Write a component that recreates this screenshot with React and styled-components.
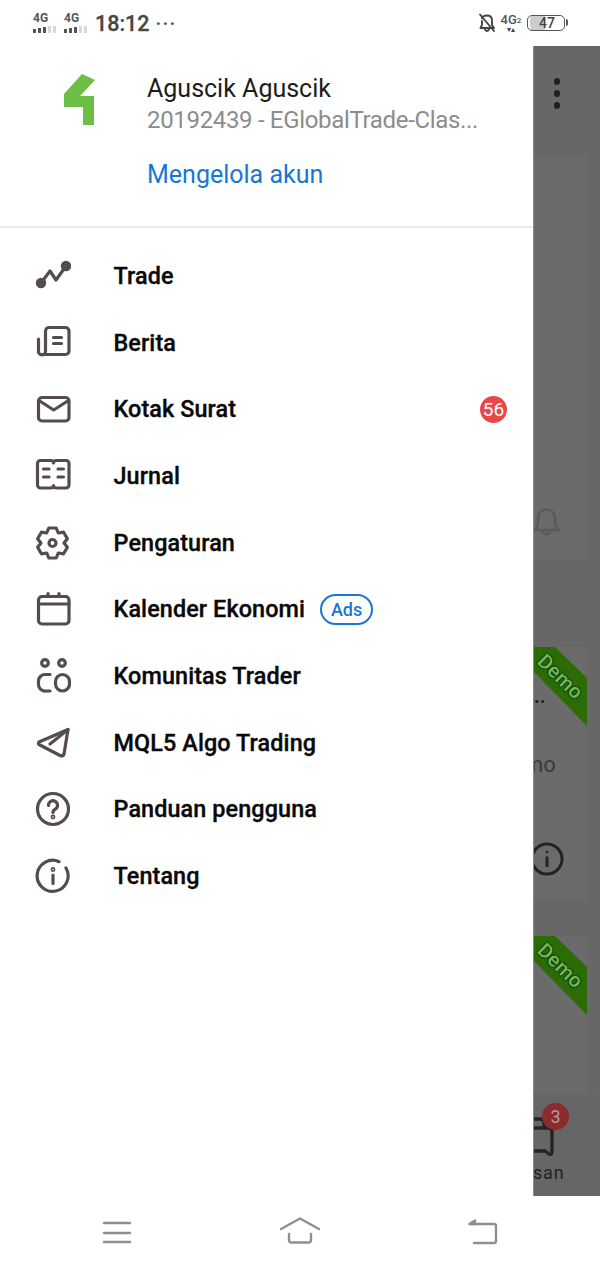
import React from "react";
import styled, { createGlobalStyle } from "styled-components";

const GlobalStyle = createGlobalStyle`
  html, body {
    margin: 0;
    padding: 0;
    background: #fff;
    font-family: Roboto, "Liberation Sans", sans-serif;
  }
`;

const Page = styled.div`
  width: 600px;
  height: 1267px;
  display: flex;
  flex-direction: column;
  overflow: hidden;
  background: #fff;
`;

/* status bar */
const StatusBar = styled.div`
  height: 46px;
  flex: none;
  display: flex;
  align-items: center;
  justify-content: space-between;
  padding: 0 35px 0 33px;
  box-sizing: border-box;
  color: #444;
`;

const StatusGroup = styled.div`
  display: flex;
  align-items: center;
`;

const Signal = styled.div`
  width: 25px;
  display: flex;
  flex-direction: column;
  gap: 2px;
  margin-right: 6px;
`;

const SignalLabel = styled.span`
  font-size: 12px;
  line-height: 11px;
  font-weight: 700;
  color: #555;
`;

const SignalBars = styled.div`
  display: flex;
  align-items: flex-end;
  gap: 2px;
  height: 7px;
`;

const SignalBar = styled.span`
  width: 3px;
  height: ${(p) => p.$h}px;
  background: ${(p) => (p.$on ? "#555" : "#d8d8d8")};
`;

const Clock = styled.span`
  font-size: 21.5px;
  font-weight: 500;
  color: #474747;
  -webkit-text-stroke: 0.3px #474747;
`;

const MoreDots = styled.span`
  font-size: 19px;
  font-weight: 700;
  letter-spacing: 1.2px;
  color: #555;
  margin-left: 6px;
`;

const NetBox = styled.div`
  width: 20px;
  display: flex;
  flex-direction: column;
  align-items: center;
  margin: 0 6px 0 5px;
`;

const NetLabel = styled.span`
  font-size: 13px;
  line-height: 13px;
  font-weight: 500;
  color: #555;
  white-space: nowrap;
  sub {
    font-size: 8px;
    line-height: 0;
    vertical-align: 1px;
  }
`;

const NetArrows = styled.span`
  font-size: 8px;
  line-height: 8px;
  color: #444;
`;

const Battery = styled.div`
  position: relative;
  width: 38px;
  height: 16px;
  border: 1.5px solid #555;
  border-radius: 5px;
  box-sizing: border-box;
  display: flex;
  align-items: center;
  justify-content: center;
  padding-left: 2px;
  font-size: 14px;
  font-weight: 500;
  color: #444;
  background: linear-gradient(to right, #ccc 0, #ccc 47%, #fff 47%);
  background-clip: content-box;
  &::after {
    content: "";
    position: absolute;
    right: -4px;
    top: 3px;
    width: 2px;
    height: 7px;
    background: #555;
    border-radius: 0 2px 2px 0;
  }
`;

/* middle area */
const Body = styled.div`
  flex: 1;
  display: flex;
  min-height: 0;
`;

const Drawer = styled.div`
  width: 533px;
  flex: none;
  background: #fff;
  display: flex;
  flex-direction: column;
`;

const Header = styled.div`
  height: 182px;
  flex: none;
  display: flex;
  box-sizing: border-box;
  padding: 28px 0 0 64px;
  border-bottom: 2px solid #e8e8e8;
`;

const Logo = styled.svg`
  width: 32px;
  height: 51px;
  flex: none;
  margin-right: 51px;
`;

const Account = styled.div`
  display: flex;
  flex-direction: column;
  min-width: 0;
`;

const AccountName = styled.div`
  font-size: 25px;
  line-height: 28px;
  margin-top: 1px;
  color: #1c1c1c;
`;

const AccountId = styled.div`
  font-size: 24px;
  line-height: 28px;
  margin-top: 3px;
  letter-spacing: -0.33px;
  color: #8c8c8c;
  white-space: nowrap;
`;

const ManageLink = styled.a`
  font-size: 25px;
  line-height: 28px;
  margin-top: 27px;
  color: #1976d2;
`;

const Menu = styled.div`
  display: flex;
  flex-direction: column;
  padding-top: 14.6px;
`;

const Row = styled.div`
  height: 66.67px;
  display: flex;
  align-items: center;
  padding: 0 26px 0 35px;
`;

const RowIcon = styled.svg`
  width: 36px;
  height: 36px;
  flex: none;
  margin-right: 42.5px;
  fill: none;
  stroke: #544d4b;
  stroke-width: 3.2;
  stroke-linecap: round;
  stroke-linejoin: round;
`;

const RowLabel = styled.span`
  font-size: 23.4px;
  font-weight: 500;
  letter-spacing: 0.1px;
  color: #0a0a0a;
  -webkit-text-stroke: 0.35px #0a0a0a;
`;

const CountBadge = styled.span`
  margin-left: auto;
  width: 27px;
  height: 27px;
  border-radius: 50%;
  background: #e8484a;
  color: #fff;
  font-size: 19px;
  display: flex;
  align-items: center;
  justify-content: center;
`;

const AdsPill = styled.span`
  margin-left: 15px;
  width: 53px;
  height: 31px;
  box-sizing: border-box;
  border: 2px solid #1976d2;
  border-radius: 16px;
  color: #1976d2;
  font-size: 18px;
  font-weight: 500;
  display: flex;
  align-items: center;
  justify-content: center;
`;

/* dimmed app behind the drawer */
const Scrim = styled.div`
  flex: 1;
  min-width: 0;
  background: #676767;
  border-left: 1px solid #8a8a8a;
  box-sizing: border-box;
  display: flex;
  flex-direction: column;
  overflow: hidden;
  color: #2a2a2a;
`;

const ScrimTop = styled.div`
  height: 110px;
  flex: none;
  display: flex;
  justify-content: flex-end;
  padding: 32px 40px 0 0;
  box-sizing: border-box;
`;

const Dots = styled.div`
  display: flex;
  flex-direction: column;
  gap: 5.5px;
  span {
    width: 6.5px;
    height: 6.5px;
    border-radius: 50%;
    background: #1f1f1f;
  }
`;

const Card = styled.div`
  position: relative;
  flex: none;
  width: 53px;
  height: ${(p) => p.$h}px;
  margin-bottom: ${(p) => p.$gap}px;
  background: #6b6b6b;
  display: flex;
  flex-direction: column;
`;

const Ribbon = styled.div`
  position: absolute;
  left: 0;
  top: 0;
  width: 53px;
  height: 80px;
  background: #2b6c07;
  clip-path: polygon(0 0, 21px 0, 53px 31px, 53px 79px, 0 25px);
`;

const RibbonText = styled.span`
  position: absolute;
  left: 0px;
  top: 17px;
  width: 50px;
  text-align: center;
  transform: rotate(44deg);
  font-size: 20px;
  font-weight: 500;
  line-height: 22px;
  letter-spacing: 0.5px;
  color: #74b862;
  text-shadow: 0 0 2px #0a3504, 0 0 2px #0a3504, 0 0 1px #0a3504;
`;

const CardBell = styled.svg`
  width: 28px;
  height: 30px;
  margin: 352px 0 0 -1px;
  fill: none;
  stroke: #5a5a5a;
  stroke-width: 2.5;
  stroke-linejoin: round;
`;

const CardTitle = styled.span`
  margin-top: 39px;
  height: 20px;
  font-size: 20px;
  line-height: 20px;
  font-weight: 700;
  color: #1c1c1c;
`;

const CardSub = styled.span`
  margin-top: 46px;
  margin-left: -10px;
  font-size: 22px;
  line-height: 26px;
  color: #3a3a3a;
`;

const CardInfo = styled.svg`
  width: 34px;
  height: 34px;
  margin: 64px 0 0 -4px;
  fill: none;
  stroke: #232323;
  stroke-width: 3;
`;

const BottomTabs = styled.div`
  margin-top: auto;
  height: 104px;
  flex: none;
  position: relative;
  background: #666;
  border-top: 1px solid #6c6c6c;
  box-sizing: border-box;
`;

const TabIcon = styled.svg`
  display: block;
  margin: 18px 0 0 -4px;
  width: 28px;
  height: 46px;
  fill: none;
  stroke: #242424;
  stroke-width: 3.4;
  stroke-linejoin: round;
`;

const TabLabel = styled.span`
  display: block;
  margin: 4px 0 0 -1px;
  font-size: 18px;
  line-height: 24px;
  letter-spacing: 0.8px;
  color: #1f1f1f;
`;

const TabBadge = styled.span`
  position: absolute;
  left: 8px;
  top: 10px;
  width: 27px;
  height: 27px;
  border-radius: 50%;
  background: #8c2a2e;
  color: #b89a9a;
  font-size: 18px;
  display: flex;
  align-items: center;
  justify-content: center;
`;

/* android nav bar */
const NavBar = styled.div`
  height: 71px;
  flex: none;
  display: flex;
  align-items: center;
  justify-content: space-between;
  padding: 0 102px 0 102px;
  box-sizing: border-box;
  background: #fff;
`;

const NavIcon = styled.svg`
  width: ${(p) => p.$w}px;
  height: 30px;
  fill: none;
  stroke: #8f8f8f;
  stroke-width: 2.4;
  stroke-linecap: round;
  stroke-linejoin: round;
`;

const gearPoints = () => {
  const pts = [];
  for (let i = 0; i < 6; i++) {
    const a = -90 + 60 * i;
    [[a - 14, 15.5], [a + 14, 15.5], [a + 30, 11.5]].forEach(([d, r]) => {
      const rad = (d * Math.PI) / 180;
      pts.push(`${(17.5 + r * Math.cos(rad)).toFixed(1)},${(18 + r * Math.sin(rad)).toFixed(1)}`);
    });
  }
  return pts.join(" ");
};

const icons = {
  trade: (
    <>
      <path d="M6 25L15 13L21 22L31 8" />
      <circle cx="6" cy="25" r="3.6" fill="#544d4b" />
      <circle cx="31" cy="8" r="3.6" fill="#544d4b" />
    </>
  ),
  news: (
    <>
      <path d="M3.5 14V26.5a3.5 3.5 0 0 0 7 0V6a3.5 3.5 0 0 1 3.5-3.5H30.5A3.5 3.5 0 0 1 34 6V26a3.5 3.5 0 0 1-3.5 3.5H7" />
      <path d="M18.5 12.5H26.5M18.5 18.5H26.5" />
    </>
  ),
  mail: (
    <>
      <rect x="3.5" y="6.5" width="30.5" height="23.5" rx="3.5" />
      <path d="M4 9.5L18.7 19L33.5 9.5" />
    </>
  ),
  journal: (
    <>
      <path d="M5.5 2.5H15.5Q18.5 2.5 18.5 5Q18.5 2.5 21.5 2.5H31A3 3 0 0 1 34 5.5V27A3 3 0 0 1 31 30H21.5Q18.5 30 18.5 27.5Q18.5 30 15.5 30H5.5A3 3 0 0 1 2.5 27V5.5A3 3 0 0 1 5.5 2.5Z" />
      <path d="M8.5 11H14M8.5 19H14M23 11H28.5M23 19H28.5" />
    </>
  ),
  gear: (
    <>
      <polygon points={gearPoints()} />
      <circle cx="17.5" cy="18" r="3.5" />
    </>
  ),
  calendar: (
    <>
      <rect x="3.5" y="5.5" width="30.5" height="27.5" rx="3.5" />
      <path d="M3.5 13H34M13 2.5V5.5M24 2.5V5.5" />
    </>
  ),
  community: (
    <>
      <circle cx="10" cy="5" r="3.3" />
      <circle cx="27" cy="5" r="3.3" />
      <path d="M15 16.5H10.5A6.5 6.5 0 0 0 3.5 23V26A6.5 6.5 0 0 0 10.5 33H15" />
      <rect x="20.5" y="16.5" width="14" height="16.5" rx="7" />
    </>
  ),
  send: (
    <>
      <path d="M33 4.5L4 17Q3 18.5 4 19.5L26 31Q28.5 31 29 29L33 4.5Z" />
      <path d="M33 4.5L15 19" />
    </>
  ),
  help: (
    <>
      <circle cx="18" cy="18" r="15.5" />
      <path d="M13.5 14.5A4.5 4.5 0 1 1 20.5 18Q18 19.2 18 21.5" />
      <circle cx="18" cy="26" r="0.8" />
    </>
  ),
  info: (
    <>
      <path d="M24 3.7A15.5 15.5 0 1 0 31 10" />
      <circle cx="18" cy="11.5" r="0.8" />
      <path d="M18 17V25.5" />
    </>
  ),
};

const menuItems = [
  { icon: "trade", label: "Trade" },
  { icon: "news", label: "Berita" },
  { icon: "mail", label: "Kotak Surat", count: 56 },
  { icon: "journal", label: "Jurnal" },
  { icon: "gear", label: "Pengaturan" },
  { icon: "calendar", label: "Kalender Ekonomi", ads: true },
  { icon: "community", label: "Komunitas Trader" },
  { icon: "send", label: "MQL5 Algo Trading" },
  { icon: "help", label: "Panduan pengguna" },
  { icon: "info", label: "Tentang" },
];

const SignalGroup = () => (
  <Signal>
    <SignalLabel>4G</SignalLabel>
    <SignalBars>
      <SignalBar $on $h={4} />
      <SignalBar $on $h={5} />
      <SignalBar $on $h={6} />
      <SignalBar $h={7} />
      <SignalBar $h={7} />
    </SignalBars>
  </Signal>
);

const App = () => {
  return (
    <Page>
      <GlobalStyle />
      <StatusBar>
        <StatusGroup>
          <SignalGroup />
          <SignalGroup />
          <Clock>18:12</Clock>
          <MoreDots>···</MoreDots>
        </StatusGroup>
        <StatusGroup>
          <svg width="18" height="20" viewBox="0 0 18 20" fill="none" stroke="#444" strokeWidth="1.9" strokeLinecap="round" strokeLinejoin="round">
            <path d="M4 5.5Q4.5 2.5 9 2.5Q14 2.5 14 7.5V12L16 15H2.5L4 12V8" />
            <path d="M7 16.5Q9 19.5 11 16.5" />
            <path d="M2 1.5L16 18" />
          </svg>
          <NetBox>
            <NetLabel>4G<sub>2</sub></NetLabel>
            <NetArrows>▾▴</NetArrows>
          </NetBox>
          <Battery>47</Battery>
        </StatusGroup>
      </StatusBar>

      <Body>
        <Drawer>
          <Header>
            <Logo viewBox="0 0 32 51">
              <polygon points="18,0 31,6 16,22 30,22 30,51 19,51 19,33 0,33 0,20" fill="#6cbe45" />
            </Logo>
            <Account>
              <AccountName>Aguscik Aguscik</AccountName>
              <AccountId>20192439 - EGlobalTrade-Clas...</AccountId>
              <ManageLink>Mengelola akun</ManageLink>
            </Account>
          </Header>
          <Menu>
            {menuItems.map((item) => (
              <Row key={item.label}>
                <RowIcon viewBox="0 0 36 36">{icons[item.icon]}</RowIcon>
                <RowLabel>{item.label}</RowLabel>
                {item.count && <CountBadge>{item.count}</CountBadge>}
                {item.ads && <AdsPill>Ads</AdsPill>}
              </Row>
            ))}
          </Menu>
        </Drawer>

        <Scrim>
          <ScrimTop>
            <Dots>
              <span />
              <span />
              <span />
            </Dots>
          </ScrimTop>
          <Card $h={404} $gap={87}>
            <CardBell viewBox="0 0 28 30">
              <path d="M1 22Q5 20 5 13V10A8.5 8.5 0 0 1 22 10V13Q22 20 26 22Z" />
              <path d="M9 23Q13.5 30 18 23" />
            </CardBell>
          </Card>
          <Card $h={253} $gap={36}>
            <Ribbon />
            <RibbonText>Demo</RibbonText>
            <CardTitle>..</CardTitle>
            <CardSub>mo</CardSub>
            <CardInfo viewBox="0 0 34 34">
              <circle cx="17" cy="17" r="15" />
              <circle cx="17" cy="10" r="1.3" fill="#232323" stroke="none" />
              <path d="M17 14.5V25" />
            </CardInfo>
          </Card>
          <Card $h={156} $gap={0}>
            <Ribbon />
            <RibbonText>Demo</RibbonText>
          </Card>
          <BottomTabs>
            <TabIcon viewBox="0 0 28 46">
              <path d="M-6 8H10Q14 8 14 12V17M-6 17H18Q22 17 22 21V41Q22 44 19 43L15 40H-6" />
            </TabIcon>
            <TabLabel>san</TabLabel>
            <TabBadge>3</TabBadge>
          </BottomTabs>
        </Scrim>
      </Body>

      <NavBar>
        <NavIcon $w={30} viewBox="0 0 30 30">
          <path d="M2 6H28M2 16H28M2 25H28" />
        </NavIcon>
        <NavIcon $w={40} viewBox="0 0 40 30">
          <path d="M1 12L20 1.5L39 12" />
          <path d="M9 17V23Q9 25.5 11.5 25.5H28.5Q31 25.5 31 23V17" />
        </NavIcon>
        <NavIcon $w={30} viewBox="0 0 30 30">
          <path d="M2 7H26Q28 7 28 9V24Q28 26 26 26H6" />
          <path d="M7 3.5L1.5 7L7 7Z" fill="#8f8f8f" />
        </NavIcon>
      </NavBar>
    </Page>
  );
};

export default App;
